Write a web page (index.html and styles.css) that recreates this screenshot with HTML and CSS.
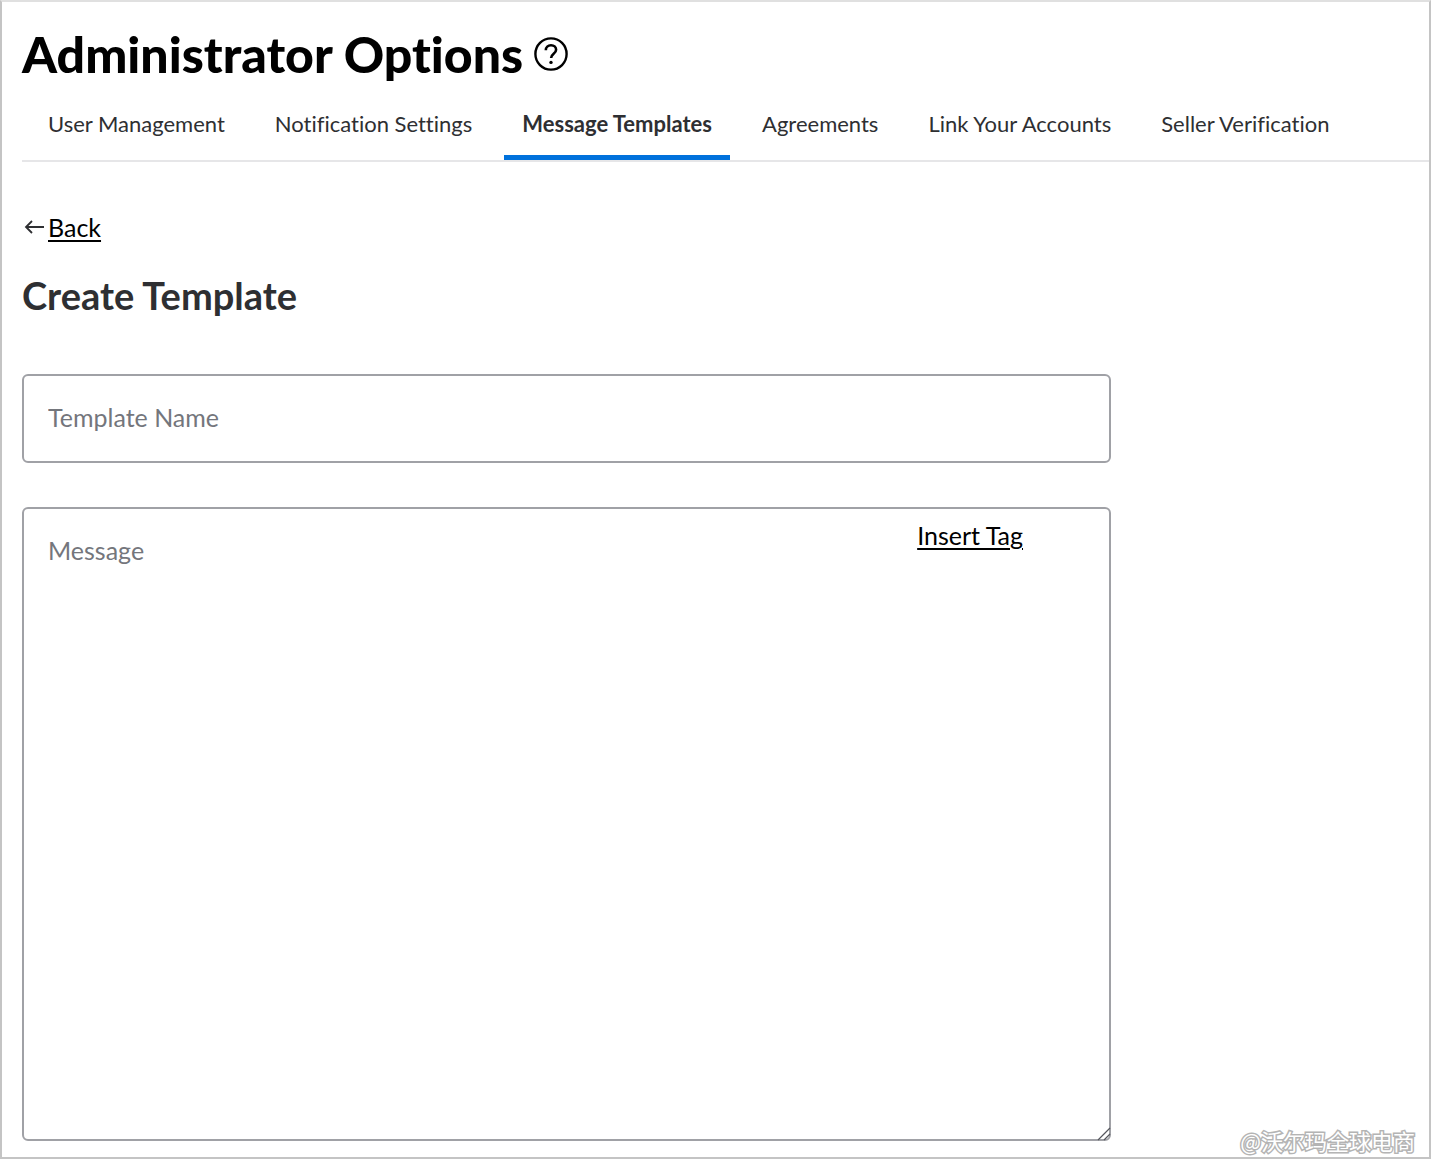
FILE: index.html
```html
<!DOCTYPE html>
<html lang="en">
<head>
<meta charset="utf-8">
<meta name="viewport" content="width=device-width, initial-scale=1">
<title>Administrator Options</title>
<link rel="stylesheet" href="styles.css">
</head>
<body>
<div class="page">
  <header class="page-header">
    <h1 class="page-title">Administrator Options</h1>
    <button class="help" type="button" aria-label="Help">
      <svg viewBox="0 0 36 36" width="36" height="36" fill="none" stroke="currentColor" stroke-width="2.4" aria-hidden="true">
        <circle cx="18" cy="18" r="15.6"/>
        <path d="M12.8 14.2c0-3 2.2-5 5.2-5s5.1 1.900 5.100 4.500c0 4-5 4-5 8.200" stroke-width="2.600"/>
        <circle cx="18" cy="26.400" r="1.700" fill="currentColor" stroke="none"/>
      </svg>
    </button>
  </header>
  <nav class="tabs" aria-label="Administrator sections">
    <a class="tab" href="#users">User Management</a>
    <a class="tab" href="#notifications">Notification Settings</a>
    <a class="tab tab-active" href="#templates" aria-current="page">Message Templates</a>
    <a class="tab" href="#agreements">Agreements</a>
    <a class="tab" href="#accounts">Link Your Accounts</a>
    <a class="tab" href="#verification">Seller Verification</a>
  </nav>
  <main class="content">
    <div class="back">
      <svg viewBox="0 0 20 16" width="20" height="16" fill="none" stroke="currentColor" stroke-width="1.800" aria-hidden="true">
        <path d="M20 8H2M8 2L2 8l6 6"/>
      </svg>
      <a class="link" href="#templates">Back</a>
    </div>
    <h2 class="section-title">Create Template</h2>
    <form class="form">
      <input class="field" type="text" aria-label="Template Name" placeholder="Template Name">
      <div class="message">
        <textarea class="field message-text" aria-label="Message" placeholder="Message"></textarea>
        <a class="link insert-tag" href="#tags">Insert Tag</a>
        <svg class="grip" viewBox="0 0 14 14" width="14" height="14" fill="none" stroke="#55565c" stroke-width="1.200" aria-hidden="true">
          <path d="M1 13L13 1M7 13l6-6"/>
        </svg>
      </div>
    </form>
  </main>
  <div class="watermark" lang="zh">@沃尔玛全球电商</div>
</div>
</body>
</html>
```
FILE: styles.css
```css
* {
  box-sizing: border-box;
}

body {
  margin: 0;
  background: #fff;
  color: #2e2f32;
  font-family: Lato, "Noto Sans CJK SC", sans-serif;
  font-variant-ligatures: none;
}

.page {
  position: relative;
  display: flex;
  flex-direction: column;
  min-height: 100vh;
  padding: 26px 0 16px 20px;
  border: 2px solid #c4c4c4;
  border-top-color: #e0e0e0;
}

.page-header {
  display: flex;
  align-items: center;
  gap: 10px;
  height: 52px;
}

.page-title {
  margin: 0;
  color: #000;
  font-size: 50px;
  font-weight: 900;
  line-height: 52px;
  white-space: nowrap;
}

.help {
  display: flex;
  padding: 0;
  border: 0;
  background: none;
  color: #000;
}

.tabs {
  display: flex;
  gap: 14px;
  margin-top: 14px;
  padding-left: 8px;
  border-bottom: 2px solid #e6e6e8;
}

.tab {
  padding: 16px 18px 17px;
  border-bottom: 5px solid transparent;
  color: #2e2f32;
  font-size: 22px;
  line-height: 28px;
  text-decoration: none;
  white-space: nowrap;
}

.tab-active {
  border-color: #0071dc;
  border-radius: 3px 3px 0 0;
  font-weight: 700;
}

.content {
  display: flex;
  flex: 1;
  flex-direction: column;
  padding-top: 49px;
}

.back {
  display: flex;
  align-items: center;
  gap: 4px;
  padding-left: 2px;
}

.link {
  color: #000;
  font-size: 25px;
  line-height: 32px;
  text-decoration: underline;
  text-decoration-thickness: 2px;
  text-underline-offset: 3px;
}

.section-title {
  margin: 28px 0 0;
  font-size: 38px;
  font-weight: 700;
  line-height: 48px;
}

.form {
  display: flex;
  flex: 1;
  flex-direction: column;
  gap: 44px;
  width: 100%;
  max-width: 1089px;
  margin-top: 55px;
}

.field {
  display: block;
  width: 100%;
  padding: 25px 24px 28px;
  border: 2px solid #a0a1a6;
  border-radius: 6px;
  background: #fff;
  color: #2e2f32;
  font-family: inherit;
  font-size: 25px;
  line-height: 32px;
}

.field::placeholder {
  color: #74767c;
  opacity: 1;
}

.message {
  position: relative;
  display: flex;
  flex: 1;
}

.message-text {
  resize: none;
}

.insert-tag {
  position: absolute;
  top: 12px;
  right: 88px;
}

.grip {
  position: absolute;
  right: 0;
  bottom: 0;
}

.watermark {
  position: absolute;
  right: 14px;
  bottom: 2px;
  color: #fff;
  font-family: "Noto Sans CJK SC", sans-serif;
  font-size: 22px;
  line-height: 30px;
  paint-order: stroke fill;
  -webkit-text-stroke: 3px #b4b4b4;
}
```
